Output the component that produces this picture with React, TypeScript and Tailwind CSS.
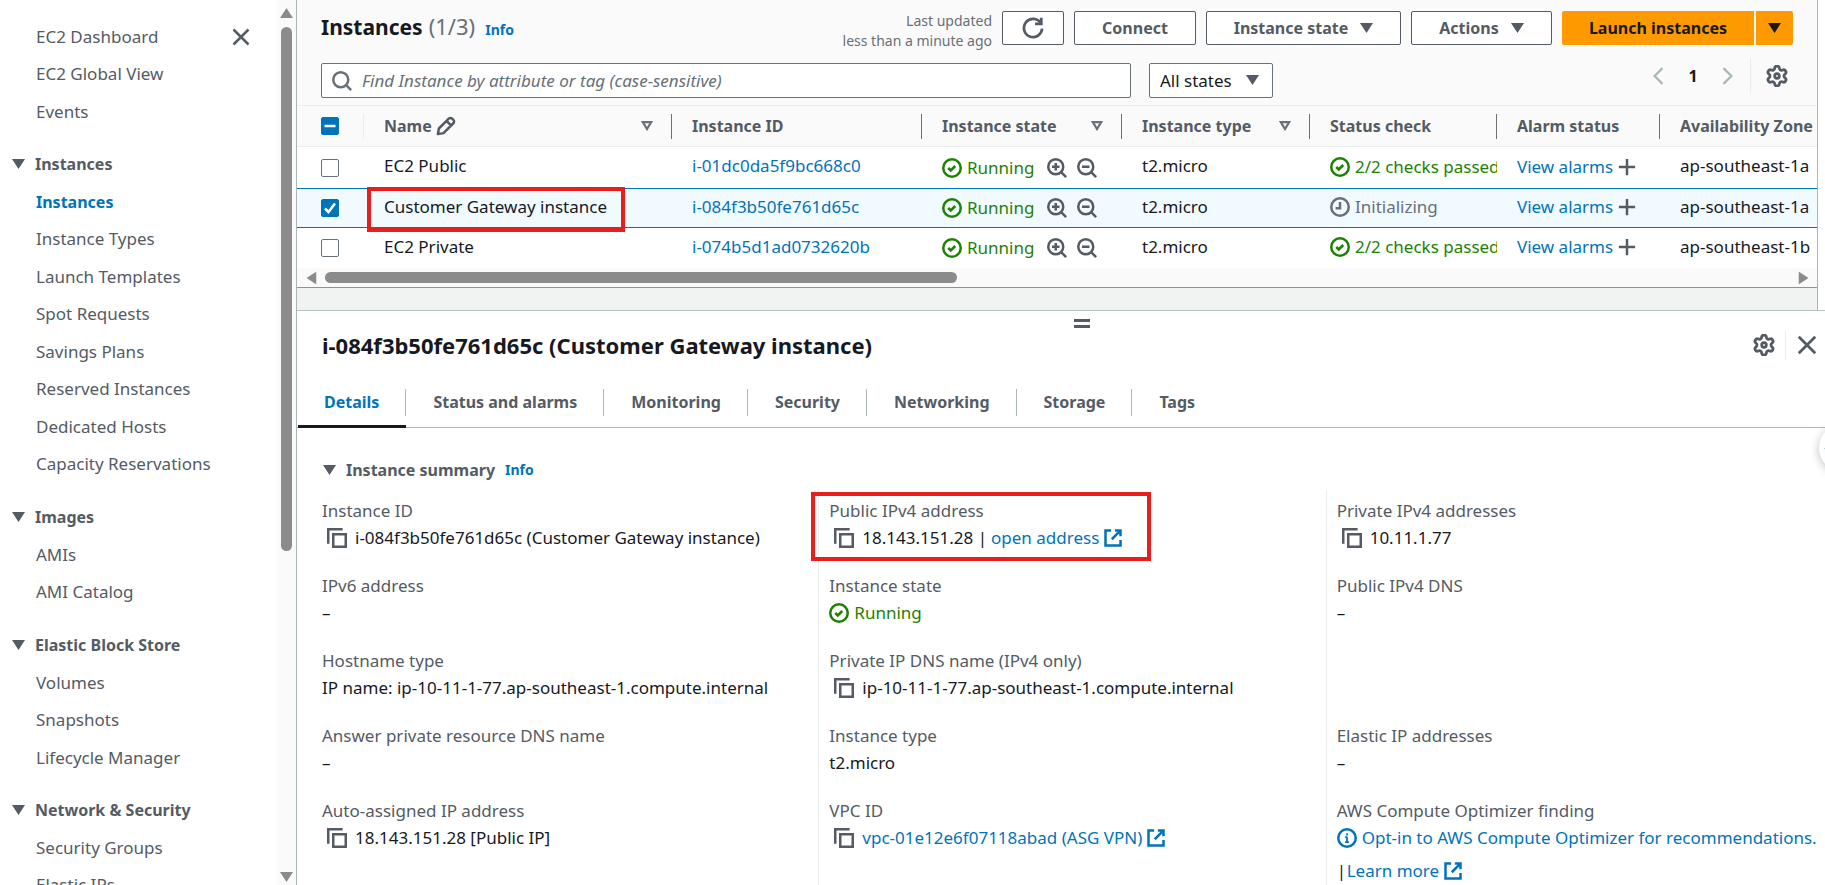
import type { ReactNode } from "react";

const navTop = ["EC2 Dashboard", "EC2 Global View", "Events"];

const navSections = [
  {
    title: "Instances",
    items: [
      "Instances",
      "Instance Types",
      "Launch Templates",
      "Spot Requests",
      "Savings Plans",
      "Reserved Instances",
      "Dedicated Hosts",
      "Capacity Reservations",
    ],
  },
  { title: "Images", items: ["AMIs", "AMI Catalog"] },
  { title: "Elastic Block Store", items: ["Volumes", "Snapshots", "Lifecycle Manager"] },
  { title: "Network & Security", items: ["Security Groups", "Elastic IPs"] },
];

const instances = [
  { name: "EC2 Public", id: "i-01dc0da5f9bc668c0", type: "t2.micro", check: "2/2 checks passed", zone: "ap-southeast-1a" },
  { name: "Customer Gateway instance", id: "i-084f3b50fe761d65c", type: "t2.micro", check: "Initializing", zone: "ap-southeast-1a", selected: true },
  { name: "EC2 Private", id: "i-074b5d1ad0732620b", type: "t2.micro", check: "2/2 checks passed", zone: "ap-southeast-1b" },
];

const tabs = ["Details", "Status and alarms", "Monitoring", "Security", "Networking", "Storage", "Tags"];

/* ---------- Icons ---------- */

const Icon = ({ children, className = "size-5" }: { children: ReactNode; className?: string }) => (
  <svg viewBox="0 0 16 16" fill="none" stroke="currentColor" strokeWidth="2" className={`shrink-0 ${className}`} aria-hidden="true">
    {children}
  </svg>
);

const CheckCircle = () => (
  <Icon>
    <circle cx="8" cy="8" r="7" />
    <path d="m5 8 2 2 3.6-3.6" />
  </Icon>
);

const Pending = () => (
  <Icon>
    <circle cx="8" cy="8" r="7" />
    <path d="M8 4v5H4.5" />
  </Icon>
);

const InfoCircle = () => (
  <Icon>
    <circle cx="8" cy="8" r="7" />
    <path d="M8 11.5V7M8 6V4.2M6.5 7.2H8M6.5 11.2h3" strokeWidth="1.4" />
  </Icon>
);

const Copy = () => (
  <Icon>
    <path d="M5 5h10v10H5zM1 12.5V1h11.5" />
  </Icon>
);

const External = () => (
  <Icon>
    <path d="M9.5 2H14v4.5M7 9l6.5-6.5M14 9.5V14H2V2h4.5" />
  </Icon>
);

const Magnifier = ({ sign }: { sign?: "in" | "out" }) => (
  <Icon>
    <circle cx="7" cy="7" r="6" />
    <path d="m11.3 11.3 4 4" />
    {sign && <path d={sign === "in" ? "M7 4v6M4 7h6" : "M4 7h6"} />}
  </Icon>
);

const Close = ({ className }: { className?: string }) => (
  <Icon className={className}>
    <path d="m2 2 12 12M14 2 2 14" />
  </Icon>
);

const Pencil = () => (
  <Icon>
    <path d="M1.5 14.5 2.3 10l7.9-7.9a1.9 1.9 0 0 1 2.7 0l1 1a1.9 1.9 0 0 1 0 2.7L6 13.7zM8.7 4.2l3.1 3.1" strokeLinejoin="round" />
  </Icon>
);

const Refresh = () => (
  <Icon className="size-[22px]">
    <path d="M14.6 8.5A6.6 6.6 0 1 1 13.6 4.5" />
    <path d="M9.5 5H14V.5" />
  </Icon>
);

const Plus = () => (
  <Icon>
    <path d="M8 1.5v13M1.5 8h13" />
  </Icon>
);

const Gear = () => (
  <svg viewBox="1 1 22 22" fill="none" stroke="currentColor" strokeWidth="2.8" className="size-[22px] shrink-0" aria-hidden="true">
    <path d="M9.671 4.136a2.34 2.34 0 0 1 4.659 0 2.34 2.34 0 0 0 3.319 1.915 2.34 2.34 0 0 1 2.33 4.033 2.34 2.34 0 0 0 0 3.831 2.34 2.34 0 0 1-2.33 4.033 2.34 2.34 0 0 0-3.319 1.915 2.34 2.34 0 0 1-4.659 0 2.34 2.34 0 0 0-3.32-1.915 2.34 2.34 0 0 1-2.33-4.033 2.34 2.34 0 0 0 0-3.831A2.34 2.34 0 0 1 6.35 6.051a2.34 2.34 0 0 0 3.319-1.915z" />
    <circle cx="12" cy="12" r="2.3" />
  </svg>
);

const Caret = ({ className = "" }: { className?: string }) => (
  <svg viewBox="0 0 12 10" fill="currentColor" className={`h-[10px] w-[13px] shrink-0 ${className}`} aria-hidden="true" preserveAspectRatio="none">
    <path d="M0 0h12L6 10z" />
  </svg>
);

const SortCaret = () => (
  <svg viewBox="0 0 12 10" fill="none" stroke="currentColor" strokeWidth="2.2" className="h-[10px] w-3 shrink-0 text-[#687078]" aria-hidden="true">
    <path d="M1.8 1.1h8.4L6 8z" />
  </svg>
);

const Chevron = ({ flip = false }: { flip?: boolean }) => (
  <Icon className={flip ? "size-[18px] rotate-180" : "size-[18px]"}>
    <path d="m12 1-7 7 7 7" />
  </Icon>
);

/* ---------- Small pieces ---------- */

const Checkbox = ({ label, state = "off" }: { label: string; state?: "on" | "off" | "mixed" }) => (
  <label className="relative block size-[18px]">
    <input
      type="checkbox"
      aria-label={label}
      defaultChecked={state !== "off"}
      className="block size-[18px] appearance-none rounded-[2px] border border-[#687078] bg-white checked:border-[#0073bb] checked:bg-[#0073bb]"
    />
    {state !== "off" && (
      <svg viewBox="0 0 18 18" fill="none" stroke="#fff" strokeWidth="2.5" className="pointer-events-none absolute inset-0 size-[18px]" aria-hidden="true">
        <path d={state === "on" ? "m4 9.5 3.5 3.5L14 4.5" : "M3.5 9h11"} />
      </svg>
    )}
  </label>
);

const Button = ({ children, className }: { children: ReactNode; className: string }) => (
  <button type="button" className={`flex h-[34px] items-center justify-center gap-3 rounded-[2px] border border-[#545b64] bg-white text-base font-bold text-[#545b64] ${className}`}>
    {children}
  </button>
);

const Link = ({ children }: { children: ReactNode }) => (
  <a href="#" className="text-[#0073bb]">
    {children}
  </a>
);

const Running = () => (
  <span className="flex items-center gap-[5px] text-[#1d8102]">
    <CheckCircle />
    Running
  </span>
);

const Field = ({ label, children }: { label: string; children: ReactNode }) => (
  <div className="relative h-[75px]">
    <dt className="h-[26px] leading-[26px] text-[#545b64]">{label}</dt>
    <dd className="whitespace-nowrap leading-[28px]">{children}</dd>
  </div>
);

const CopyValue = ({ children }: { children: ReactNode }) => (
  <div className="flex items-center gap-2 pl-[5px]">
    <button type="button" aria-label="Copy" className="text-[#545b64]">
      <Copy />
    </button>
    <span className="flex items-center gap-1">{children}</span>
  </div>
);

const HeadCell = ({ children, sortable = false, last = false }: { children: ReactNode; sortable?: boolean; last?: boolean }) => (
  <th scope="col" className="border-b border-[#eaeded] p-0 text-left font-bold">
    <div className={`flex h-[25px] items-center justify-between pr-[18px] pl-5 ${last ? "" : "border-r border-[#687078]"}`}>
      <span className="flex items-center gap-1 whitespace-nowrap">{children}</span>
      {sortable && <SortCaret />}
    </div>
  </th>
);

/* ---------- Page regions ---------- */

const Sidebar = () => (
  <aside className="flex w-[297px] shrink-0 border-r border-[#aab7b8] bg-white text-[#545b64]">
    <nav className="relative flex-1 overflow-hidden pt-[18px]">
      <button type="button" aria-label="Close navigation" className="absolute top-[27px] right-[26px]">
        <Close />
      </button>
      <ul className="pl-9">
        {navTop.map((item) => (
          <li key={item} className="flex h-[37px] items-center even:h-[38px]">
            <a href="#">{item}</a>
          </li>
        ))}
      </ul>
      {navSections.map((section) => (
        <section key={section.title} className="pt-[15px]">
          <h2 className="flex h-[38px] items-center gap-[10px] pl-3 text-base font-bold">
            <Caret />
            {section.title}
          </h2>
          <ul className="pl-9">
            {section.items.map((item) => (
              <li key={item} className="flex h-[37px] items-center even:h-[38px]">
                <a href="#" className={item === "Instances" ? "text-base font-bold text-[#0073bb]" : ""}>
                  {item}
                </a>
              </li>
            ))}
          </ul>
        </section>
      ))}
    </nav>
    {/* Scroll track */}
    <div className="flex w-[19px] flex-col items-center bg-[#fafafa] pt-[8px] pb-[3px] text-[#8b8b8b]">
      <Caret className="rotate-180" />
      <div className="mt-[9px] h-3/5 w-[11px] rounded-full bg-[#8b8b8b]"></div>
      <Caret className="mt-auto" />
    </div>
  </aside>
);

const Toolbar = () => (
  <header className="pr-6 pl-6">
    <div className="flex items-start pt-[11px]">
      <h1 className="flex items-baseline text-[21px] leading-[30px] font-bold text-[#16191f]">
        Instances
        <span className="ml-[6px] text-[22px] font-normal text-[#687078]">(1/3)</span>
        <a href="#" className="ml-[10px] text-sm font-bold text-[#0073bb]">
          Info
        </a>
      </h1>
      <p className="ml-auto pr-[10px] text-right text-sm leading-5 text-[#687078]">
        Last updated
        <br />
        less than a minute ago
      </p>
      <div className="flex gap-[10px]">
        <Button className="w-[62px]">
          <Refresh />
        </Button>
        <Button className="w-[122px]">Connect</Button>
        <Button className="w-[195px]">
          Instance state
          <Caret />
        </Button>
        <Button className="w-[141px]">
          Actions
          <Caret />
        </Button>
        <div className="flex gap-[2px]">
          <button type="button" className="h-[34px] w-[192px] rounded-l-[2px] bg-[#ff9900] text-base font-bold text-[#16191f]">
            Launch instances
          </button>
          <button type="button" aria-label="More launch options" className="flex h-[34px] w-[37px] items-center justify-center rounded-r-[2px] bg-[#ff9900] text-[#16191f]">
            <Caret />
          </button>
        </div>
      </div>
    </div>

    <div className="flex items-start pt-[12px] pb-[7px]">
      <label className="flex h-[35px] w-[810px] items-center gap-[10px] rounded-[2px] border border-[#687078] bg-white pl-[10px] text-[#687078]">
        <Magnifier />
        <input
          type="text"
          aria-label="Find Instance"
          placeholder="Find Instance by attribute or tag (case-sensitive)"
          className="flex-1 outline-none placeholder:text-[#687078] placeholder:italic"
        />
      </label>
      <div className="relative ml-[18px]">
        <select aria-label="State filter" className="h-[35px] w-[124px] appearance-none rounded-[2px] border border-[#687078] bg-white pl-[10px]">
          <option>All states</option>
        </select>
        <Caret className="pointer-events-none absolute top-[12px] right-[14px] text-[#545b64]" />
      </div>
      <div className="-mt-[5px] ml-auto flex h-[35px] items-center">
        <button type="button" aria-label="Previous page" className="text-[#aab7b8]">
          <Chevron />
        </button>
        <span className="w-[52px] text-center text-base font-bold">1</span>
        <button type="button" aria-label="Next page" className="text-[#aab7b8]">
          <Chevron flip />
        </button>
        <div className="mr-[15px] ml-[13px] h-[35px] w-px bg-[#eaeded]"></div>
        <button type="button" aria-label="Preferences" className="mr-[5px] text-[#545b64]">
          <Gear />
        </button>
      </div>
    </div>
  </header>
);

const InstanceTable = () => (
  <div className="overflow-hidden border-t border-[#eaeded]">
    <table className="w-[1560px] table-fixed border-separate border-spacing-0">
      <colgroup>
        <col className="w-[67px]" />
        <col className="w-[308px]" />
        <col className="w-[250px]" />
        <col className="w-[200px]" />
        <col className="w-[188px]" />
        <col className="w-[187px]" />
        <col className="w-[163px]" />
        <col />
      </colgroup>
      <thead>
        <tr className="h-[41px] text-base text-[#545b64]">
          <th scope="col" className="border-b border-[#eaeded] p-0">
            <div className="flex h-[25px] items-center border-r border-[#eaeded] pl-6">
              <Checkbox label="Select all instances" state="mixed" />
            </div>
          </th>
          <HeadCell sortable>
            Name <Pencil />
          </HeadCell>
          <HeadCell>Instance ID</HeadCell>
          <HeadCell sortable>Instance state</HeadCell>
          <HeadCell sortable>Instance type</HeadCell>
          <HeadCell>Status check</HeadCell>
          <HeadCell>Alarm status</HeadCell>
          <HeadCell last>Availability Zone</HeadCell>
        </tr>
      </thead>
      <tbody>
        {instances.map((row) => (
          <tr
            key={row.id}
            className={
              row.selected
                ? "h-10 bg-[#f1faff] *:border-y *:border-[#0073bb]"
                : "h-[41px] bg-white last:h-10"
            }
          >
            <td className="p-0 pl-6">
              <Checkbox label={`Select ${row.name}`} state={row.selected ? "on" : "off"} />
            </td>
            <td className="relative p-0 pb-[3px] pl-5">
              {row.name}
              {row.selected && <div className="absolute -top-[2px] left-[3px] h-[45px] w-[258px] border-4 border-[#e81e1e]"></div>}
            </td>
            <td className="p-0 pb-[3px] pl-5">
              <Link>{row.id}</Link>
            </td>
            <td className="p-0 pl-5">
              <div className="flex items-center text-[#545b64]">
                <Running />
                <button type="button" aria-label="Filter by this state" className="ml-[13px]">
                  <Magnifier sign="in" />
                </button>
                <button type="button" aria-label="Filter out this state" className="ml-[10px]">
                  <Magnifier sign="out" />
                </button>
              </div>
            </td>
            <td className="p-0 pb-[3px] pl-5">{row.type}</td>
            <td className="overflow-hidden p-0 pb-[2px] pl-5">
              <div className={`flex items-center gap-[5px] overflow-hidden whitespace-nowrap ${row.selected ? "text-[#687078]" : "text-[#1d8102]"}`}>
                {row.selected ? <Pending /> : <CheckCircle />}
                {row.check}
              </div>
            </td>
            <td className="p-0 pb-[2px] pl-5">
              <div className="flex items-center gap-1">
                <Link>View alarms</Link>
                <button type="button" aria-label="Create alarm" className="text-[#545b64]">
                  <Plus />
                </button>
              </div>
            </td>
            <td className="p-0 pb-[3px] pl-5">{row.zone}</td>
          </tr>
        ))}
      </tbody>
    </table>
    {/* Horizontal scroll track */}
    <div className="flex h-[19px] items-center pr-[7px] pl-2 text-[#8b8b8b]">
      <Caret className="rotate-90" />
      <div className="ml-[7px] h-[11px] w-[632px] rounded-full bg-[#8b8b8b]"></div>
      <Caret className="ml-auto -rotate-90" />
    </div>
  </div>
);

const SummaryColumn = ({ children, divided = true }: { children: ReactNode; divided?: boolean }) => (
  <dl className={`border-l pt-[9px] pl-[10px] ${divided ? "border-[#eaeded]" : "border-transparent"}`}>{children}</dl>
);

const DetailsPanel = () => (
  <section className="flex flex-1 flex-col overflow-hidden border-t border-[#b8c4c4] bg-white">
    <div className="flex h-[17px] items-end justify-center pl-[42px] text-[#545b64]">
      <button type="button" aria-label="Resize panel" className="flex w-4 flex-col gap-[3px]">
        <span className="h-[3px] bg-current"></span>
        <span className="h-[3px] bg-current"></span>
      </button>
    </div>
    <div className="flex h-[34px] items-center pr-[7px] pl-[25px]">
      <h2 className="text-[22px] leading-8 font-bold text-[#16191f]">i-084f3b50fe761d65c (Customer Gateway instance)</h2>
      <div className="ml-auto flex items-center text-[#545b64]">
        <button type="button" aria-label="Panel preferences">
          <Gear />
        </button>
        <div className="mx-[10px] h-[29px] w-px bg-[#eaeded]"></div>
        <button type="button" aria-label="Close panel">
          <Close className="size-[22px]" />
        </button>
      </div>
    </div>

    <div role="tablist" className="mt-4 flex h-[50px] shrink-0 gap-px border-b border-[#aab7b8] pl-px text-base font-bold text-[#545b64]">
      {tabs.map((tab, i) => (
        <button
          key={tab}
          type="button"
          role="tab"
          aria-selected={i === 0}
          className={`group flex h-[50px] items-start border-b-[3px] pt-[11px] ${i === 0 ? "border-[#16191f] text-[#0073bb]" : "border-transparent"}`}
        >
          <span className="border-r border-[#aab7b8] px-[26px] leading-[27px] group-last:border-transparent">{tab}</span>
        </button>
      ))}
    </div>

    <h3 className="mt-[29px] flex h-[26px] items-center pl-[26px] text-base font-bold text-[#545b64]">
      <Caret />
      <span className="ml-[10px]">Instance summary</span>
      <a href="#" className="ml-[10px] text-sm text-[#0073bb]">
        Info
      </a>
    </h3>

    <div className="mt-[6px] -mr-2 grid flex-1 grid-cols-3 pl-[14px]">
      <SummaryColumn divided={false}>
        <Field label="Instance ID">
          <CopyValue>i-084f3b50fe761d65c (Customer Gateway instance)</CopyValue>
        </Field>
        <Field label="IPv6 address">–</Field>
        <Field label="Hostname type">IP name: ip-10-11-1-77.ap-southeast-1.compute.internal</Field>
        <Field label="Answer private resource DNS name">–</Field>
        <Field label="Auto-assigned IP address">
          <CopyValue>18.143.151.28 [Public IP]</CopyValue>
        </Field>
      </SummaryColumn>
      <SummaryColumn>
        <Field label="Public IPv4 address">
          <CopyValue>
            18.143.151.28 | <Link>open address</Link>
            <span className="text-[#0073bb]">
              <External />
            </span>
          </CopyValue>
          <div className="absolute -top-[6px] -left-[18px] h-[69px] w-[340px] border-4 border-[#e81e1e]"></div>
        </Field>
        <Field label="Instance state">
          <Running />
        </Field>
        <Field label="Private IP DNS name (IPv4 only)">
          <CopyValue>ip-10-11-1-77.ap-southeast-1.compute.internal</CopyValue>
        </Field>
        <Field label="Instance type">t2.micro</Field>
        <Field label="VPC ID">
          <CopyValue>
            <Link>vpc-01e12e6f07118abad (ASG VPN)</Link>
            <span className="text-[#0073bb]">
              <External />
            </span>
          </CopyValue>
        </Field>
      </SummaryColumn>
      <SummaryColumn>
        <Field label="Private IPv4 addresses">
          <CopyValue>10.11.1.77</CopyValue>
        </Field>
        <Field label="Public IPv4 DNS">–</Field>
        <div className="h-[75px]"></div>
        <Field label="Elastic IP addresses">–</Field>
        <Field label="AWS Compute Optimizer finding">
          <a href="#" className="flex items-center gap-[5px] text-[#0073bb]">
            <InfoCircle />
            Opt-in to AWS Compute Optimizer for recommendations.
          </a>
          <div className="mt-[5px] flex items-center gap-1">
            <span className="w-[6px]">|</span>
            <Link>Learn more</Link>
            <span className="text-[#0073bb]">
              <External />
            </span>
          </div>
        </Field>
      </SummaryColumn>
    </div>
  </section>
);

const App = () => {
  return (
    <div className="relative flex h-screen overflow-hidden bg-white font-['Noto_Sans',sans-serif] text-[17px] leading-6 text-[#16191f]">
      <Sidebar />
      <main className="flex min-w-0 flex-1 flex-col">
        <div className="mr-[7px] border-r border-[#aab7b8] bg-[#f1f3f3] pb-[22px]">
          <div className="border-b border-[#879596] bg-[#fafafa]">
            <Toolbar />
            <InstanceTable />
          </div>
        </div>
        <DetailsPanel />
      </main>
      {/* Floating helper, mostly off the right edge */}
      <button
        type="button"
        aria-label="Open helper"
        className="absolute top-[424px] -right-[42px] flex size-12 items-center rounded-full bg-white pl-[5px] shadow-[0_2px_10px_rgba(0,0,0,0.25)]"
      >
        <span className="h-px w-6 bg-[#9fe0c8]"></span>
      </button>
    </div>
  );
};

export default App;
